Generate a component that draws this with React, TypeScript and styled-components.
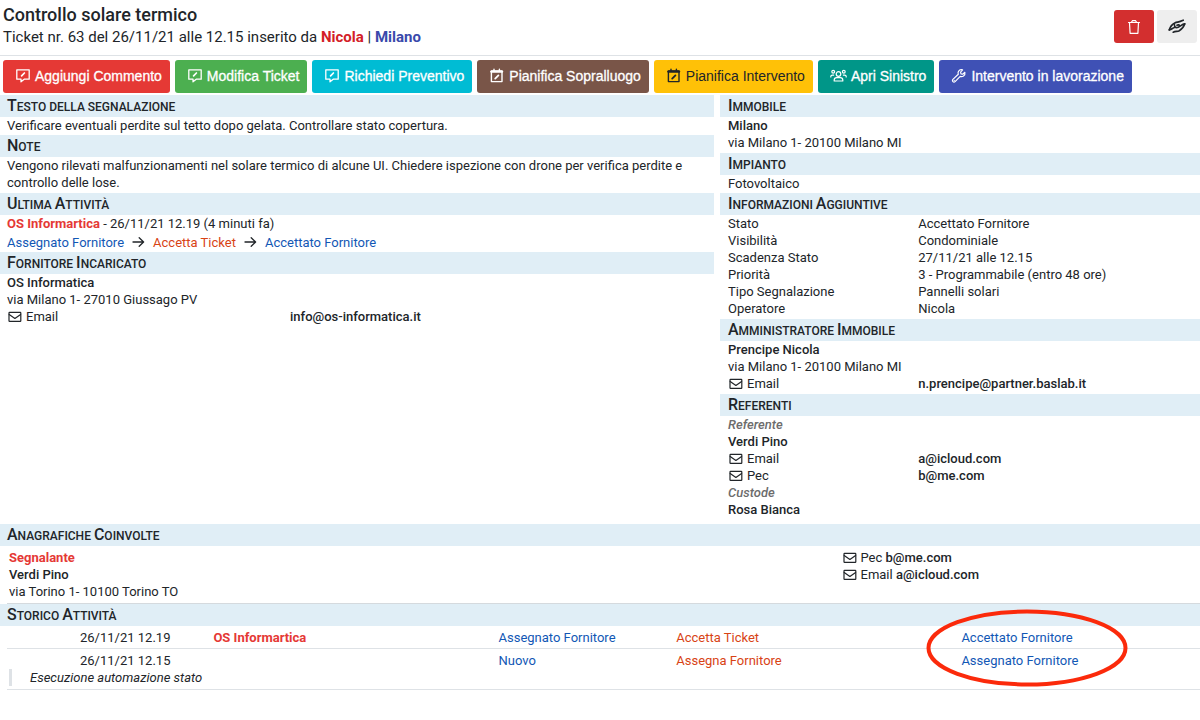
import React from "react";
import styled, { createGlobalStyle } from "styled-components";

const Global = createGlobalStyle`
  *, *::before, *::after { box-sizing: border-box; }
  body {
    margin: 0;
    background: #fff;
    color: #212529;
    font-family: Roboto, "Liberation Sans", sans-serif;
    font-size: 13px;
    line-height: 17px;
  }
  h1, h2, p, dl, dd, dt { margin: 0; }
`;

const Page = styled.main`
  display: flex;
  flex-direction: column;
`;

const TopBar = styled.header`
  display: flex;
  justify-content: space-between;
  align-items: flex-start;
  padding: 3px 3px 7px;
  border-bottom: 1px solid #dee2e6;
`;

const Title = styled.h1`
  font-size: 18px;
  line-height: 23px;
  font-weight: 500;
`;

const Subtitle = styled.p`
  font-size: 15px;
  line-height: 22px;
`;

const Tinted = styled.strong<{ $color: string }>`
  color: ${(p) => p.$color};
  font-weight: 700;
`;

const IconActions = styled.div`
  display: flex;
  gap: 3px;
  padding-top: 7px;
`;

const IconButton = styled.button<{ $bg: string; $fg: string }>`
  display: flex;
  align-items: center;
  justify-content: center;
  width: 40px;
  height: 33px;
  padding: 0;
  border: 0;
  border-radius: 3px;
  background: ${(p) => p.$bg};
  color: ${(p) => p.$fg};
`;

const Toolbar = styled.nav`
  display: flex;
  flex-wrap: wrap;
  gap: 5px;
  padding: 4px 3px 2px;
`;

const ActionButton = styled.button<{ $bg: string; $dark?: boolean }>`
  display: flex;
  align-items: center;
  gap: 4px;
  height: 33px;
  padding: 0 8px 1px 12px;
  border: 0;
  border-radius: 3px;
  background: ${(p) => p.$bg};
  color: ${(p) => (p.$dark ? "#212529" : "#fff")};
  font: 400 14px/20px "Liberation Sans", Arial, sans-serif;
  -webkit-text-stroke: ${(p) => (p.$dark ? "0" : "0.3px currentColor")};
  white-space: nowrap;
`;

const Columns = styled.div`
  display: grid;
  grid-template-columns: minmax(0, 119fr) minmax(0, 80fr);
  gap: 6px;
  min-height: 429px;
`;

const Column = styled.div``;

const HeadingBar = styled.h2<{ $inset?: boolean }>`
  height: 22px;
  padding: 0 ${(p) => (p.$inset ? 8 : 7)}px;
  background: #e0eef6;
  font-size: 12px;
  line-height: 22px;
  font-weight: 500;
  text-transform: uppercase;
`;

const Initial = styled.span`
  font-size: 16px;
`;

const Body = styled.div<{ $inset?: boolean; $tight?: boolean }>`
  padding: 0 8px ${(p) => (p.$tight ? 1 : 2)}px ${(p) => (p.$inset ? 8 : 7)}px;
`;

const Flow = styled.p`
  display: flex;
  align-items: center;
  gap: 8px;
  padding-top: 2px;
`;

const StateLink = styled.a<{ $action?: boolean }>`
  color: ${(p) => (p.$action ? "#d84315" : "#1257b5")};
  text-decoration: none;
`;

const Pairs = styled.dl<{ $wide?: boolean }>`
  display: grid;
  grid-template-columns: ${(p) => (p.$wide ? "283fr 416fr" : "41fr 59fr")};
`;

const Strong = styled.strong`
  font-weight: 500;
`;

const Role = styled.p`
  color: #6c6c6c;
  font-style: italic;
  font-weight: 500;
`;

const MailLabel = styled.span`
  display: flex;
  align-items: center;
  gap: 4px;
  height: 17px;
`;

const People = styled.div`
  display: grid;
  grid-template-columns: 829fr 355fr;
  margin-left: 7px;
  padding: 3px 2px;
  border-bottom: 1px solid #d5dade;
`;

const History = styled.div`
  position: relative;
  margin-left: 7px;
`;

const HistoryTable = styled.table`
  width: 100%;
  table-layout: fixed;
  border-collapse: separate;
  border-spacing: 0;
`;

const Col = styled.col<{ $width: string }>`
  width: ${(p) => p.$width};
`;

const Cell = styled.td<{ $ruled?: boolean; $date?: boolean }>`
  height: ${(p) => (p.$ruled ? 23 : 20)}px;
  padding: ${(p) => (p.$ruled ? 0 : 3)}px 0 0 ${(p) => (p.$date ? 73 : 0)}px;
  border-bottom: ${(p) => (p.$ruled ? "1px solid #dee2e6" : "0")};
`;

const RemarkCell = styled.td`
  padding: 0 0 3px 2px;
  border-bottom: 1px solid #dee2e6;
`;

const Remark = styled.p`
  padding-left: 18px;
  border-left: 3px solid #dee2e6;
  font-style: italic;
`;

const Highlight = styled.svg`
  position: absolute;
  top: -17px;
  right: 72px;
  width: 202px;
  height: 78px;
  pointer-events: none;
`;

const stroke = {
  fill: "none",
  stroke: "currentColor",
  strokeLinecap: "round",
  strokeLinejoin: "round",
} as const;

const CommentIcon = () => (
  <svg width="16" height="16" viewBox="0 0 16 16" {...stroke} strokeWidth="1.3" aria-hidden="true">
    <path d="M1.8 1.8h12.4v9.400H9.200L6 13.800v-2.600H1.800z" />
    <path d="M6.600 7.800l2.800-2.800" strokeWidth="1.700" />
  </svg>
);

const CalendarIcon = () => (
  <svg width="16" height="16" viewBox="0 0 16 16" {...stroke} strokeWidth="1.4" aria-hidden="true">
    <path d="M2.400 3h10.600v10.600H2.400z" />
    <path d="M2.400 3.600h10.600" strokeWidth="2.400" />
    <path d="M5 1.200v2M10.400 1.200v2" />
    <path d="M6.200 10.600l3.200-3.200" strokeWidth="1.800" />
  </svg>
);

const UsersIcon = () => (
  <svg width="17" height="16" viewBox="0 0 17 16" {...stroke} strokeWidth="1.2" aria-hidden="true">
    <circle cx="8.5" cy="6" r="2.300" />
    <path d="M4.200 13v-.9c0-1.500 1.100-2.500 2.500-2.500h3.600c1.400 0 2.500 1 2.500 2.500v.9z" />
    <circle cx="3.200" cy="3.800" r="1.400" />
    <circle cx="13.800" cy="3.800" r="1.400" />
    <path d="M.8 9V8.600c0-.9.7-1.500 1.600-1.500h1.300M16.200 9V8.600c0-.9-.7-1.500-1.600-1.500h-1.300" />
  </svg>
);

const WrenchIcon = () => (
  <svg width="16" height="16" viewBox="0 0 16 16" {...stroke} strokeWidth="1.2" aria-hidden="true">
    <path d="M13.900 4.300l-2.200 1.900-1.700-.4-.4-1.700 2-2.200c-1.500-.5-3.200 0-4 1.300-.6.9-.7 2-.3 3L1.900 11.400c-.6.6-.6 1.600 0 2.200s1.600.6 2.200 0l5.100-5.200c1.100.4 2.300.2 3.300-.5 1.200-.9 1.700-2.300 1.400-3.600z" />
    <path d="M3.200 12.400v.1" />
  </svg>
);

const TrashIcon = () => (
  <svg width="14" height="16" viewBox="0 0 14 16" {...stroke} strokeWidth="1.2" aria-hidden="true">
    <path d="M1.500 3.500h11M4.500 3.300l.9-1.600h3.200l.9 1.600M2.500 3.700l.6 10.600h7.800l.6-10.600" />
  </svg>
);

const HiddenIcon = () => (
  <svg width="18" height="15" viewBox="0 0 18 15" {...stroke} strokeWidth="1.700" aria-hidden="true">
    <path d="M1.200 11C2.200 8 4 5.300 6.800 4 9 3 10 3.400 11.600 2.600L15.200 1.200" />
    <path d="M16.800 4.800C15.800 7.800 14 10.300 11.300 11.700 9.200 12.700 7.800 12.100 5.200 13.200" />
    <path d="M1.400 10.800c2.300-.2 3.100-1.700 5-2.300M6.400 5.600C6.300 8.700 8.300 9 10.200 8.200c2.400-1 4-3 6.400-3.400M9 6.200c1.200-.6 2.300-.4 2.500.8" />
  </svg>
);

const MailIcon = () => (
  <svg width="15" height="12" viewBox="0 0 15 12" {...stroke} strokeWidth="1.2" aria-hidden="true">
    <rect x="2" y="1.300" width="11.800" height="9" rx=".6" />
    <path d="M2.200 3.500l5.700 4 5.700-4" />
  </svg>
);

const ArrowIcon = () => (
  <svg width="13" height="12" viewBox="0 0 13 12" {...stroke} strokeWidth="1.300" aria-hidden="true">
    <path d="M1 5h10.500M7.200 .8L11.600 5l-4.400 4.200" />
  </svg>
);

const Mail = ({ children }: { children: React.ReactNode }) => (
  <MailLabel>
    <MailIcon />
    {children}
  </MailLabel>
);

// Small capitals: capital letters are drawn larger than the rest of the word.
const Heading = ({ text, inset }: { text: string; inset?: boolean }) => (
  <HeadingBar $inset={inset}>
    {text
      .split(/([A-Z])/)
      .filter(Boolean)
      .map((part, i) => (/^[A-Z]$/.test(part) ? <Initial key={i}>{part}</Initial> : part))}
  </HeadingBar>
);

const actions = [
  { label: "Aggiungi Commento", bg: "#e53935", icon: <CommentIcon /> },
  { label: "Modifica Ticket", bg: "#4caf50", icon: <CommentIcon /> },
  { label: "Richiedi Preventivo", bg: "#00bcd4", icon: <CommentIcon /> },
  { label: "Pianifica Sopralluogo", bg: "#795548", icon: <CalendarIcon /> },
  { label: "Pianifica Intervento", bg: "#ffc107", icon: <CalendarIcon />, dark: true },
  { label: "Apri Sinistro", bg: "#009688", icon: <UsersIcon /> },
  { label: "Intervento in lavorazione", bg: "#3f51b5", icon: <WrenchIcon /> },
];

const info = [
  ["Stato", "Accettato Fornitore"],
  ["Visibilità", "Condominiale"],
  ["Scadenza Stato", "27/11/21 alle 12.15"],
  ["Priorità", "3 - Programmabile (entro 48 ore)"],
  ["Tipo Segnalazione", "Pannelli solari"],
  ["Operatore", "Nicola"],
];

export default function App() {
  return (
    <>
      <Global />
      <Page>
        <TopBar>
          <div>
            <Title>Controllo solare termico</Title>
            <Subtitle>
              Ticket nr. 63 del 26/11/21 alle 12.15 inserito da <Tinted $color="#d32027">Nicola</Tinted> |{" "}
              <Tinted $color="#3949ab">Milano</Tinted>
            </Subtitle>
          </div>
          <IconActions>
            <IconButton $bg="#d32f2f" $fg="#fff" aria-label="Elimina"><TrashIcon /></IconButton>
            <IconButton $bg="#eeeeee" $fg="#212529" aria-label="Nascondi"><HiddenIcon /></IconButton>
          </IconActions>
        </TopBar>
        <Toolbar>
          {actions.map((a) => (
            <ActionButton key={a.label} $bg={a.bg} $dark={a.dark}>
              {a.icon}
              {a.label}
            </ActionButton>
          ))}
        </Toolbar>
        <Columns>
          <Column>
            <Heading text="Testo della segnalazione" />
            <Body $tight>Verificare eventuali perdite sul tetto dopo gelata. Controllare stato copertura.</Body>
            <Heading text="Note" />
            <Body>
              Vengono rilevati malfunzionamenti nel solare termico di alcune UI. Chiedere ispezione con drone per
              verifica perdite e controllo delle lose.
            </Body>
            <Heading text="Ultima Attività" />
            <Body $tight>
              <p><Tinted $color="#e53935">OS Informartica</Tinted> - 26/11/21 12.19 (4 minuti fa)</p>
              <Flow>
                <StateLink href="#assegnato">Assegnato Fornitore</StateLink>
                <ArrowIcon />
                <StateLink href="#accetta" $action>Accetta Ticket</StateLink>
                <ArrowIcon />
                <StateLink href="#accettato">Accettato Fornitore</StateLink>
              </Flow>
            </Body>
            <Heading text="Fornitore Incaricato" />
            <Body>
              <p><Strong>OS Informatica</Strong></p>
              <p>via Milano 1- 27010 Giussago PV</p>
              <Pairs $wide>
                <dt><Mail>Email</Mail></dt>
                <dd><Strong>info@os-informatica.it</Strong></dd>
              </Pairs>
            </Body>
          </Column>
          <Column>
            <Heading inset text="Immobile" />
            <Body $inset>
              <p><Strong>Milano</Strong></p>
              <p>via Milano 1- 20100 Milano MI</p>
            </Body>
            <Heading inset text="Impianto" />
            <Body $inset $tight>Fotovoltaico</Body>
            <Heading inset text="Informazioni Aggiuntive" />
            <Body $inset>
              <Pairs>
                {info.map(([k, v]) => (
                  <React.Fragment key={k}>
                    <dt>{k}</dt>
                    <dd>{v}</dd>
                  </React.Fragment>
                ))}
              </Pairs>
            </Body>
            <Heading inset text="Amministratore Immobile" />
            <Body $inset>
              <p><Strong>Prencipe Nicola</Strong></p>
              <p>via Milano 1- 20100 Milano MI</p>
              <Pairs>
                <dt><Mail>Email</Mail></dt>
                <dd><Strong>n.prencipe@partner.baslab.it</Strong></dd>
              </Pairs>
            </Body>
            <Heading inset text="Referenti" />
            <Body $inset>
              <Role>Referente</Role>
              <p><Strong>Verdi Pino</Strong></p>
              <Pairs>
                <dt><Mail>Email</Mail></dt>
                <dd><Strong>a@icloud.com</Strong></dd>
                <dt><Mail>Pec</Mail></dt>
                <dd><Strong>b@me.com</Strong></dd>
              </Pairs>
              <Role>Custode</Role>
              <p><Strong>Rosa Bianca</Strong></p>
            </Body>
          </Column>
        </Columns>
        <Heading text="Anagrafiche Coinvolte" />
        <People>
          <div>
            <p><Tinted $color="#e53935">Segnalante</Tinted></p>
            <p><Strong>Verdi Pino</Strong></p>
            <p>via Torino 1- 10100 Torino TO</p>
          </div>
          <div>
            <Mail><span>Pec <Strong>b@me.com</Strong></span></Mail>
            <Mail><span>Email <Strong>a@icloud.com</Strong></span></Mail>
          </div>
        </People>
        <Heading text="Storico Attività" />
        <History>
          <HistoryTable>
            <colgroup>
              <Col $width="17.3%" />
              <Col $width="23.9%" />
              <Col $width="14.9%" />
              <Col $width="23.9%" />
              <Col $width="20%" />
            </colgroup>
            <tbody>
              <tr>
                <Cell $ruled $date>26/11/21 12.19</Cell>
                <Cell $ruled><Tinted $color="#e53935">OS Informartica</Tinted></Cell>
                <Cell $ruled><StateLink href="#assegnato">Assegnato Fornitore</StateLink></Cell>
                <Cell $ruled><StateLink href="#accetta" $action>Accetta Ticket</StateLink></Cell>
                <Cell $ruled><StateLink href="#accettato">Accettato Fornitore</StateLink></Cell>
              </tr>
              <tr>
                <Cell $date>26/11/21 12.15</Cell>
                <Cell />
                <Cell><StateLink href="#nuovo">Nuovo</StateLink></Cell>
                <Cell><StateLink href="#assegna" $action>Assegna Fornitore</StateLink></Cell>
                <Cell><StateLink href="#assegnato">Assegnato Fornitore</StateLink></Cell>
              </tr>
              <tr>
                <RemarkCell colSpan={5}><Remark>Esecuzione automazione stato</Remark></RemarkCell>
              </tr>
            </tbody>
          </HistoryTable>
          <Highlight viewBox="0 0 202 78" aria-hidden="true">
            <ellipse cx="101" cy="39" rx="98.500" ry="36.500" fill="none" stroke="#fb2a0b" strokeWidth="4" />
          </Highlight>
        </History>
      </Page>
    </>
  );
}
